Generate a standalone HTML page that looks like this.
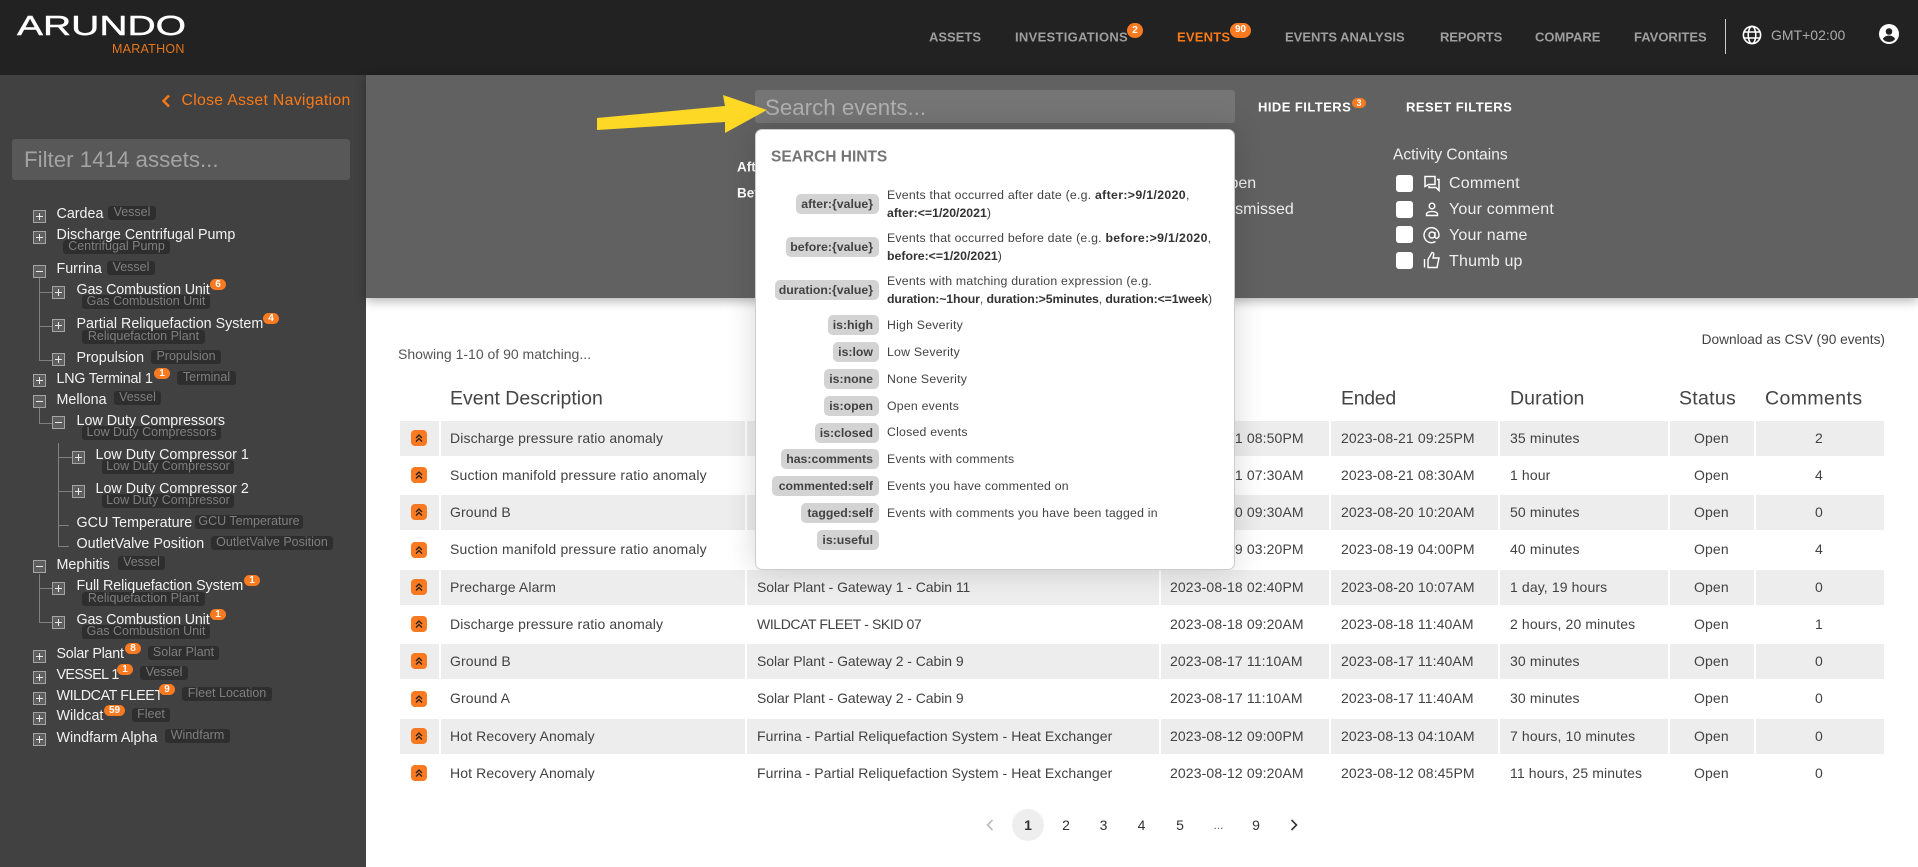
<!DOCTYPE html>
<html><head><meta charset="utf-8"><style>
html,body{margin:0;padding:0;width:1918px;height:867px;overflow:hidden;background:#fff;font-family:"Liberation Sans",sans-serif}
div,span,b,svg{position:absolute}
.t{white-space:nowrap;line-height:1;transform:translateY(-50%)}
.nav{font-size:13px;font-weight:bold;color:#9e9e9e;top:37px}
.bdg{background:#f97a21;color:#fff;font-size:10px;font-weight:bold;text-align:center;border-radius:7px;line-height:11px;height:11px;width:16px;z-index:2}
.n{font-size:14.3px;color:#f2f2f2;white-space:nowrap;line-height:1;margin-left:-.5px;transform:translateY(calc(-50% + 1px));z-index:1}
.g{font-weight:normal;background:#2e2e2e;color:#7f7f7f;font-size:12.5px;border-radius:3px;height:14px;line-height:13px;text-align:center;white-space:nowrap;overflow:hidden}
.x{width:11px;height:11px;border:1px solid #a5a5a5;background:#5e5e5e}
.x:before{content:"";position:absolute;left:2px;top:5px;width:7px;height:1px;background:#e8e8e8}
.p:after{content:"";position:absolute;left:5px;top:2px;width:1px;height:7px;background:#e8e8e8}
.l{background:#808080}
.h{background:#d3d3d3;color:#424242;font-weight:bold;font-size:12.3px;border-radius:5px;height:20px;line-height:20px;text-align:right;padding-right:6px;box-sizing:border-box;white-space:nowrap}
.d{font-size:12.3px;color:#424242;left:131px;white-space:nowrap;line-height:1;letter-spacing:.22px;transform:translateY(-50%)}
.d b{position:static;color:#333;letter-spacing:0}
.d b.q{letter-spacing:.35px}
.d b.w{letter-spacing:-.12px}
.a{font-size:16px;color:#eee;left:1449px;letter-spacing:.2px}
.cb{left:1396px;width:17px;height:17px;background:#fff;border-radius:3px}
.th{font-size:19.5px;color:#444;top:399px}
.r{left:400px;width:1484px;height:35px}
.gr .c{background:#ededed}
.c{height:35px;top:0}
.c1{left:0;width:39px}.c2{left:41px;width:304px}.c3{left:347px;width:412px}.c4{left:761px;width:168px}.c5{left:931px;width:167px}.c6{left:1100px;width:168px}.c7{left:1270px;width:84px}.c8{left:1356px;width:128px}
.v{font-size:14px;color:#424242;top:16.5px;letter-spacing:.12px}
.sev{left:11px;top:9px;width:16px;height:16px;background:#f97a21;border-radius:4px}
.pg{font-size:14px;color:#333;top:825px;text-align:center;width:30px}
</style></head><body>

<!-- header -->
<div style="left:0;top:0;width:1918px;height:75px;background:#222"></div>
<svg style="left:14px;top:8px" width="176" height="32"><text x="3" y="27" font-family="Liberation Sans" font-size="27.5" fill="#fff" stroke="#fff" stroke-width=".4" textLength="169" lengthAdjust="spacingAndGlyphs">ARUNDO</text></svg>
<div class="t" style="left:112px;top:48.5px;font-size:12.5px;color:#e4761d;letter-spacing:.25px">MARATHON</div>
<div class="t nav" style="left:929px">ASSETS</div>
<div class="t nav" style="left:1015px;letter-spacing:.3px">INVESTIGATIONS</div>
<div class="bdg" style="left:1127px;top:23px;height:15px;line-height:15px;border-radius:8px">2</div>
<div class="t nav" style="left:1177px;color:#f97a16;letter-spacing:.2px">EVENTS</div>
<div class="bdg" style="left:1230px;top:23px;width:21px;height:15px;line-height:14px;border-radius:8px">90</div>
<div class="t nav" style="left:1285px">EVENTS ANALYSIS</div>
<div class="t nav" style="left:1440px;letter-spacing:-.1px">REPORTS</div>
<div class="t nav" style="left:1535px">COMPARE</div>
<div class="t nav" style="left:1634px">FAVORITES</div>
<div style="left:1725px;top:19px;width:1px;height:35px;background:#ccc"></div>
<svg style="left:1742px;top:25px" width="20" height="20" viewBox="0 0 20 20" fill="none" stroke="#fff" stroke-width="1.6"><circle cx="10" cy="10" r="8.6"/><ellipse cx="10" cy="10" rx="3.8" ry="8.6"/><path d="M2 7h16M2 13h16"/></svg>
<div class="t" style="left:1771px;top:35px;font-size:14px;color:#aaa">GMT+02:00</div>
<svg style="left:1879px;top:24px" width="20" height="20" viewBox="0 0 20 20"><circle cx="10" cy="10" r="10" fill="#fff"/><circle cx="10" cy="7.5" r="3.3" fill="#222"/><path d="M3.8 15c1.5-2.6 3.7-3.4 6.2-3.4s4.7 .8 6.2 3.4c-1.5 1.9-3.7 3-6.2 3s-4.7-1.1-6.2-3z" fill="#222"/></svg>

<!-- sidebar -->
<div style="left:0;top:75px;width:366px;height:792px;background:#414141"></div>
<svg style="left:161px;top:94px" width="10" height="14" viewBox="0 0 10 14" fill="none" stroke="#f97a16" stroke-width="2.4"><path d="M8 1.5 2.5 7 8 12.5"/></svg>
<div class="t" style="left:181.5px;top:101px;font-size:15.8px;color:#f97a16;letter-spacing:.3px">Close Asset Navigation</div>
<div style="left:12px;top:139px;width:338px;height:41px;background:#585858;border-radius:3px"></div>
<div class="t" style="left:24px;top:159.5px;font-size:22.3px;color:#a3a3a3">Filter 1414 assets...</div>

<!-- tree lines -->
<div class="l" style="left:39px;top:278px;width:1px;height:82px"></div><div class="l" style="left:39px;top:292px;width:13px;height:1px"></div><div class="l" style="left:39px;top:326px;width:13px;height:1px"></div><div class="l" style="left:39px;top:360px;width:13px;height:1px"></div>
<div class="l" style="left:39px;top:408px;width:1px;height:15px"></div><div class="l" style="left:39px;top:423px;width:13px;height:1px"></div>
<div class="l" style="left:58px;top:443px;width:1px;height:104px"></div><div class="l" style="left:58px;top:457px;width:14px;height:1px"></div><div class="l" style="left:58px;top:491px;width:14px;height:1px"></div><div class="l" style="left:58px;top:525px;width:11px;height:1px"></div><div class="l" style="left:58px;top:546px;width:11px;height:1px"></div>
<div class="l" style="left:39px;top:574px;width:1px;height:48px"></div><div class="l" style="left:39px;top:588px;width:13px;height:1px"></div><div class="l" style="left:39px;top:622px;width:13px;height:1px"></div>

<!-- tree items -->
<div class="x p" style="left:33px;top:210px"></div><div class="n" style="left:57px;top:213px">Cardea</div><b class="g" style="left:108px;top:206px;width:48px">Vessel</b>
<div class="x p" style="left:33px;top:231px"></div><div class="n" style="left:57px;top:234px">Discharge Centrifugal Pump</div><b class="g" style="left:63px;top:240px;width:107px">Centrifugal Pump</b>
<div class="x" style="left:33px;top:265px"></div><div class="n" style="left:57px;top:268px">Furrina</div><b class="g" style="left:107px;top:261px;width:48px">Vessel</b>
<div class="x p" style="left:52px;top:286px"></div><div class="n" style="left:77px;top:289px;letter-spacing:-.15px">Gas Combustion Unit</div><div class="bdg" style="left:210px;top:279px">6</div><b class="g" style="left:82px;top:295px;width:128px">Gas Combustion Unit</b>
<div class="x p" style="left:52px;top:319px"></div><div class="n" style="left:77px;top:323px">Partial Reliquefaction System</div><div class="bdg" style="left:263px;top:313px">4</div><b class="g" style="left:82px;top:330px;width:123px">Reliquefaction Plant</b>
<div class="x p" style="left:52px;top:353px"></div><div class="n" style="left:77px;top:357px">Propulsion</div><b class="g" style="left:151px;top:350px;width:70px">Propulsion</b>
<div class="x p" style="left:33px;top:374px"></div><div class="n" style="left:57px;top:378px;letter-spacing:-.2px">LNG Terminal 1</div><div class="bdg" style="left:154px;top:368px">1</div><b class="g" style="left:177px;top:371px;width:59px">Terminal</b>
<div class="x" style="left:33px;top:395px"></div><div class="n" style="left:57px;top:399px">Mellona</div><b class="g" style="left:114px;top:391px;width:47px">Vessel</b>
<div class="x" style="left:52px;top:416px"></div><div class="n" style="left:77px;top:420px">Low Duty Compressors</div><b class="g" style="left:82px;top:426px;width:139px">Low Duty Compressors</b>
<div class="x p" style="left:72px;top:451px"></div><div class="n" style="left:96px;top:454px">Low Duty Compressor 1</div><b class="g" style="left:102px;top:460px;width:132px">Low Duty Compressor</b>
<div class="x p" style="left:72px;top:485px"></div><div class="n" style="left:96px;top:488px">Low Duty Compressor 2</div><b class="g" style="left:102px;top:494px;width:132px">Low Duty Compressor</b>
<div class="n" style="left:77px;top:522px">GCU Temperature</div><b class="g" style="left:195px;top:515px;width:108px">GCU Temperature</b>
<div class="n" style="left:77px;top:543px">OutletValve Position</div><b class="g" style="left:211px;top:536px;width:122px">OutletValve Position</b>
<div class="x" style="left:33px;top:560px"></div><div class="n" style="left:57px;top:564px">Mephitis</div><b class="g" style="left:118px;top:556px;width:47px">Vessel</b>
<div class="x p" style="left:52px;top:582px"></div><div class="n" style="left:77px;top:585px;letter-spacing:-.1px">Full Reliquefaction System</div><div class="bdg" style="left:244px;top:575px">1</div><b class="g" style="left:82px;top:592px;width:123px">Reliquefaction Plant</b>
<div class="x p" style="left:52px;top:616px"></div><div class="n" style="left:77px;top:619px;letter-spacing:-.15px">Gas Combustion Unit</div><div class="bdg" style="left:210px;top:609px">1</div><b class="g" style="left:82px;top:625px;width:128px">Gas Combustion Unit</b>
<div class="x p" style="left:33px;top:650px"></div><div class="n" style="left:57px;top:653px;letter-spacing:-.25px">Solar Plant</div><div class="bdg" style="left:125px;top:643px">8</div><b class="g" style="left:148px;top:646px;width:71px">Solar Plant</b>
<div class="x p" style="left:33px;top:671px"></div><div class="n" style="left:57px;top:674px;letter-spacing:-.6px">VESSEL 1</div><div class="bdg" style="left:117px;top:664px">1</div><b class="g" style="left:140px;top:666px;width:48px">Vessel</b>
<div class="x p" style="left:33px;top:692px"></div><div class="n" style="left:57px;top:695px;letter-spacing:-.4px">WILDCAT FLEET</div><div class="bdg" style="left:159px;top:684px">9</div><b class="g" style="left:182px;top:687px;width:90px">Fleet Location</b>
<div class="x p" style="left:33px;top:712px"></div><div class="n" style="left:57px;top:715px">Wildcat</div><div class="bdg" style="left:104px;top:705px;width:21px">59</div><b class="g" style="left:132px;top:708px;width:38px">Fleet</b>
<div class="x p" style="left:33px;top:733px"></div><div class="n" style="left:57px;top:737px">Windfarm Alpha</div><b class="g" style="left:165px;top:729px;width:65px">Windfarm</b>

<!-- filter panel -->
<div style="left:366px;top:75px;width:1552px;height:223px;background:#616161;box-shadow:0 3px 10px rgba(0,0,0,.3)"></div>
<div style="left:755px;top:90px;width:480px;height:33px;background:#757575;border-radius:3px"></div>
<div class="t" style="left:765px;top:107.5px;font-size:22.3px;color:#b0b0b0">Search events...</div>
<svg style="left:590px;top:90px" width="185" height="48"><polygon points="7,28 135,16 133,5 177,20 135,43 135,32 7,40" fill="#fdd825"/></svg>
<div class="t" style="left:737px;top:167px;font-size:13.5px;font-weight:bold;color:#fff">After</div>
<div class="t" style="left:737px;top:193px;font-size:13.5px;font-weight:bold;color:#fff">Before</div>
<div class="t" style="left:1217px;top:184px;font-size:16px;color:#eee">Open</div>
<div class="t" style="left:1220px;top:210px;font-size:16px;color:#eee">Dismissed</div>
<div class="t" style="left:1258px;top:107px;font-size:13px;font-weight:bold;color:#fff;letter-spacing:.45px">HIDE FILTERS</div>
<div class="bdg" style="left:1352px;top:98px;width:14px;height:10px;font-size:9px;line-height:10px">3</div>
<div class="t" style="left:1406px;top:107px;font-size:13px;font-weight:bold;color:#fff;letter-spacing:.47px">RESET FILTERS</div>
<div class="t" style="left:1393px;top:155px;font-size:15.5px;color:#eee">Activity Contains</div>
<div class="cb" style="top:175px"></div><div class="cb" style="top:200.5px"></div><div class="cb" style="top:226px"></div><div class="cb" style="top:252px"></div>
<svg style="left:1423px;top:174px" width="18" height="18" viewBox="0 0 18 18" fill="none" stroke="#fff" stroke-width="1.5"><path d="M2 2.5h10v8H5.5L2 12.5z"/><path d="M14 5.500h2v11l-3-3H6v-1.500"/></svg>
<svg style="left:1424px;top:200px" width="16" height="18" viewBox="0 0 16 18" fill="none" stroke="#fff" stroke-width="1.4"><circle cx="8" cy="6" r="2.8"/><path d="M2.5 15.5v-1.5c0-1.6 3-2.600 5.500-2.600s5.500 1 5.500 2.600v1.500z"/></svg>
<svg style="left:1423px;top:226px" width="18" height="18" viewBox="0 0 18 18" fill="none" stroke="#fff" stroke-width="1.4"><circle cx="9" cy="9" r="3"/><path d="M12 6v4.500c0 2.600 4 2.600 4-1.500a7.500 7.500 0 1 0-3.500 6.500"/></svg>
<svg style="left:1423px;top:251px" width="18" height="18" viewBox="0 0 18 18" fill="none" stroke="#fff" stroke-width="1.4"><path d="M1.500 8v8.500M5 8.500 9 1.500c1.500 0 2 1 1.700 2.500L10 7h6l-2 9.500H5z"/></svg>
<div class="t a" style="top:184px">Comment</div>
<div class="t a" style="top:210px">Your comment</div>
<div class="t a" style="top:236px">Your name</div>
<div class="t a" style="top:262px">Thumb up</div>

<!-- table -->
<div class="t" style="left:398px;top:354px;font-size:14px;color:#555">Showing 1-10 of 90 matching...</div>
<div class="t" style="right:33px;top:340px;font-size:13.7px;color:#424242">Download as CSV (90 events)</div>
<div class="t th" style="left:450px">Event Description</div>
<div class="t th" style="left:1341px;letter-spacing:-.3px">Ended</div>
<div class="t th" style="left:1510px;letter-spacing:.1px">Duration</div>
<div class="t th" style="left:1679px;letter-spacing:.3px">Status</div>
<div class="t th" style="left:1765px;letter-spacing:.4px">Comments</div>

<div class="r gr" style="top:421px"><div class="c c1"></div><div class="c c2"></div><div class="c c3"></div><div class="c c4"></div><div class="c c5"></div><div class="c c6"></div><div class="c c7"></div><div class="c c8"></div><div class="sev"><svg width="16" height="16" fill="none" stroke="#222" stroke-width="1.3"><path d="M5 8l3-3 3 3M5 11.5l3-3 3 3"/></svg></div><div class="t v" style="left:50px">Discharge pressure ratio anomaly</div><div class="t v" style="left:770px">2023-08-21 08:50PM</div><div class="t v" style="left:941px">2023-08-21 09:25PM</div><div class="t v" style="left:1110px">35 minutes</div><div class="t v" style="left:1294px">Open</div><div class="t v" style="left:1415px">2</div></div>
<div class="r" style="top:458px"><div class="sev"><svg width="16" height="16" fill="none" stroke="#222" stroke-width="1.3"><path d="M5 8l3-3 3 3M5 11.5l3-3 3 3"/></svg></div><div class="t v" style="left:50px;letter-spacing:.18px">Suction manifold pressure ratio anomaly</div><div class="t v" style="left:770px">2023-08-21 07:30AM</div><div class="t v" style="left:941px">2023-08-21 08:30AM</div><div class="t v" style="left:1110px">1 hour</div><div class="t v" style="left:1294px">Open</div><div class="t v" style="left:1415px">4</div></div>
<div class="r gr" style="top:495px"><div class="c c1"></div><div class="c c2"></div><div class="c c3"></div><div class="c c4"></div><div class="c c5"></div><div class="c c6"></div><div class="c c7"></div><div class="c c8"></div><div class="sev"><svg width="16" height="16" fill="none" stroke="#222" stroke-width="1.3"><path d="M5 8l3-3 3 3M5 11.5l3-3 3 3"/></svg></div><div class="t v" style="left:50px">Ground B</div><div class="t v" style="left:770px">2023-08-20 09:30AM</div><div class="t v" style="left:941px">2023-08-20 10:20AM</div><div class="t v" style="left:1110px">50 minutes</div><div class="t v" style="left:1294px">Open</div><div class="t v" style="left:1415px">0</div></div>
<div class="r" style="top:532.5px"><div class="sev"><svg width="16" height="16" fill="none" stroke="#222" stroke-width="1.3"><path d="M5 8l3-3 3 3M5 11.5l3-3 3 3"/></svg></div><div class="t v" style="left:50px;letter-spacing:.18px">Suction manifold pressure ratio anomaly</div><div class="t v" style="left:770px">2023-08-19 03:20PM</div><div class="t v" style="left:941px">2023-08-19 04:00PM</div><div class="t v" style="left:1110px">40 minutes</div><div class="t v" style="left:1294px">Open</div><div class="t v" style="left:1415px">4</div></div>
<div class="r gr" style="top:570px"><div class="c c1"></div><div class="c c2"></div><div class="c c3"></div><div class="c c4"></div><div class="c c5"></div><div class="c c6"></div><div class="c c7"></div><div class="c c8"></div><div class="sev"><svg width="16" height="16" fill="none" stroke="#222" stroke-width="1.3"><path d="M5 8l3-3 3 3M5 11.5l3-3 3 3"/></svg></div><div class="t v" style="left:50px">Precharge Alarm</div><div class="t v" style="left:357px;letter-spacing:-.06px">Solar Plant - Gateway 1 - Cabin 11</div><div class="t v" style="left:770px">2023-08-18 02:40PM</div><div class="t v" style="left:941px">2023-08-20 10:07AM</div><div class="t v" style="left:1110px">1 day, 19 hours</div><div class="t v" style="left:1294px">Open</div><div class="t v" style="left:1415px">0</div></div>
<div class="r" style="top:607px"><div class="sev"><svg width="16" height="16" fill="none" stroke="#222" stroke-width="1.3"><path d="M5 8l3-3 3 3M5 11.5l3-3 3 3"/></svg></div><div class="t v" style="left:50px">Discharge pressure ratio anomaly</div><div class="t v" style="left:357px;letter-spacing:-.4px">WILDCAT FLEET - SKID 07</div><div class="t v" style="left:770px">2023-08-18 09:20AM</div><div class="t v" style="left:941px">2023-08-18 11:40AM</div><div class="t v" style="left:1110px">2 hours, 20 minutes</div><div class="t v" style="left:1294px">Open</div><div class="t v" style="left:1415px">1</div></div>
<div class="r gr" style="top:644px"><div class="c c1"></div><div class="c c2"></div><div class="c c3"></div><div class="c c4"></div><div class="c c5"></div><div class="c c6"></div><div class="c c7"></div><div class="c c8"></div><div class="sev"><svg width="16" height="16" fill="none" stroke="#222" stroke-width="1.3"><path d="M5 8l3-3 3 3M5 11.5l3-3 3 3"/></svg></div><div class="t v" style="left:50px">Ground B</div><div class="t v" style="left:357px;letter-spacing:-.06px">Solar Plant - Gateway 2 - Cabin 9</div><div class="t v" style="left:770px">2023-08-17 11:10AM</div><div class="t v" style="left:941px">2023-08-17 11:40AM</div><div class="t v" style="left:1110px">30 minutes</div><div class="t v" style="left:1294px">Open</div><div class="t v" style="left:1415px">0</div></div>
<div class="r" style="top:681.5px"><div class="sev"><svg width="16" height="16" fill="none" stroke="#222" stroke-width="1.3"><path d="M5 8l3-3 3 3M5 11.5l3-3 3 3"/></svg></div><div class="t v" style="left:50px">Ground A</div><div class="t v" style="left:357px;letter-spacing:-.06px">Solar Plant - Gateway 2 - Cabin 9</div><div class="t v" style="left:770px">2023-08-17 11:10AM</div><div class="t v" style="left:941px">2023-08-17 11:40AM</div><div class="t v" style="left:1110px">30 minutes</div><div class="t v" style="left:1294px">Open</div><div class="t v" style="left:1415px">0</div></div>
<div class="r gr" style="top:719px"><div class="c c1"></div><div class="c c2"></div><div class="c c3"></div><div class="c c4"></div><div class="c c5"></div><div class="c c6"></div><div class="c c7"></div><div class="c c8"></div><div class="sev"><svg width="16" height="16" fill="none" stroke="#222" stroke-width="1.3"><path d="M5 8l3-3 3 3M5 11.5l3-3 3 3"/></svg></div><div class="t v" style="left:50px">Hot Recovery Anomaly</div><div class="t v" style="left:357px;letter-spacing:.05px">Furrina - Partial Reliquefaction System - Heat Exchanger</div><div class="t v" style="left:770px">2023-08-12 09:00PM</div><div class="t v" style="left:941px">2023-08-13 04:10AM</div><div class="t v" style="left:1110px">7 hours, 10 minutes</div><div class="t v" style="left:1294px">Open</div><div class="t v" style="left:1415px">0</div></div>
<div class="r" style="top:756px"><div class="sev"><svg width="16" height="16" fill="none" stroke="#222" stroke-width="1.3"><path d="M5 8l3-3 3 3M5 11.5l3-3 3 3"/></svg></div><div class="t v" style="left:50px">Hot Recovery Anomaly</div><div class="t v" style="left:357px;letter-spacing:.05px">Furrina - Partial Reliquefaction System - Heat Exchanger</div><div class="t v" style="left:770px">2023-08-12 09:20AM</div><div class="t v" style="left:941px">2023-08-12 08:45PM</div><div class="t v" style="left:1110px">11 hours, 25 minutes</div><div class="t v" style="left:1294px">Open</div><div class="t v" style="left:1415px">0</div></div>

<!-- pagination -->
<svg style="left:985px;top:819px" width="10" height="12" viewBox="0 0 10 12" fill="none" stroke="#bbb" stroke-width="1.6"><path d="M7.5 1 2.5 6l5 5"/></svg>
<div style="left:1012px;top:809px;width:32px;height:32px;border-radius:50%;background:#eee"></div>
<div class="t pg" style="left:1013px;font-weight:bold">1</div>
<div class="t pg" style="left:1051px">2</div>
<div class="t pg" style="left:1088.5px">3</div>
<div class="t pg" style="left:1126.5px">4</div>
<div class="t pg" style="left:1165px">5</div>
<div class="t pg" style="left:1203.5px;color:#666;font-size:12px">...</div>
<div class="t pg" style="left:1241px">9</div>
<svg style="left:1289px;top:819px" width="10" height="12" viewBox="0 0 10 12" fill="none" stroke="#333" stroke-width="1.6"><path d="M2.5 1l5 5-5 5"/></svg>

<!-- search hints popup -->
<div style="left:755px;top:129px;width:478px;height:439px;background:#fff;border:1px solid #ccc;border-radius:7px;box-shadow:0 0 30px rgba(0,0,0,.16)">
<div class="t" style="left:15px;top:27px;font-size:15.5px;font-weight:bold;color:#757575">SEARCH HINTS</div>
<b class="h" style="left:40px;top:64px;width:83px">after:{value}</b>
<div class="d" style="top:65px">Events that occurred after date (e.g. <b class="q">after:&gt;9/1/2020</b>,</div><div class="d" style="top:83px"><b>after:&lt;=1/20/2021</b>)</div>
<b class="h" style="left:30px;top:107px;width:93px">before:{value}</b>
<div class="d" style="top:108px">Events that occurred before date (e.g. <b class="q">before:&gt;9/1/2020</b>,</div><div class="d" style="top:126px"><b>before:&lt;=1/20/2021</b>)</div>
<b class="h" style="left:19px;top:150px;width:104px">duration:{value}</b>
<div class="d" style="top:151px">Events with matching duration expression (e.g.</div><div class="d" style="top:169px;letter-spacing:-.1px"><b class="w">duration:~1hour</b>, <b class="w">duration:&gt;5minutes</b>, <b class="w">duration:&lt;=1week</b>)</div>
<b class="h" style="left:72px;top:185px;width:51px">is:high</b><div class="d" style="top:195px">High Severity</div>
<b class="h" style="left:77px;top:212px;width:46px">is:low</b><div class="d" style="top:222px">Low Severity</div>
<b class="h" style="left:68px;top:239px;width:55px">is:none</b><div class="d" style="top:249px">None Severity</div>
<b class="h" style="left:68px;top:266px;width:55px">is:open</b><div class="d" style="top:275.5px">Open events</div>
<b class="h" style="left:59px;top:293px;width:64px">is:closed</b><div class="d" style="top:302px">Closed events</div>
<b class="h" style="left:25px;top:319px;width:98px">has:comments</b><div class="d" style="top:329px">Events with comments</div>
<b class="h" style="left:16px;top:346px;width:107px">commented:self</b><div class="d" style="top:356px">Events you have commented on</div>
<b class="h" style="left:45px;top:373px;width:78px">tagged:self</b><div class="d" style="top:383px">Events with comments you have been tagged in</div>
<b class="h" style="left:61px;top:400px;width:62px">is:useful</b>
</div>
</body></html>
